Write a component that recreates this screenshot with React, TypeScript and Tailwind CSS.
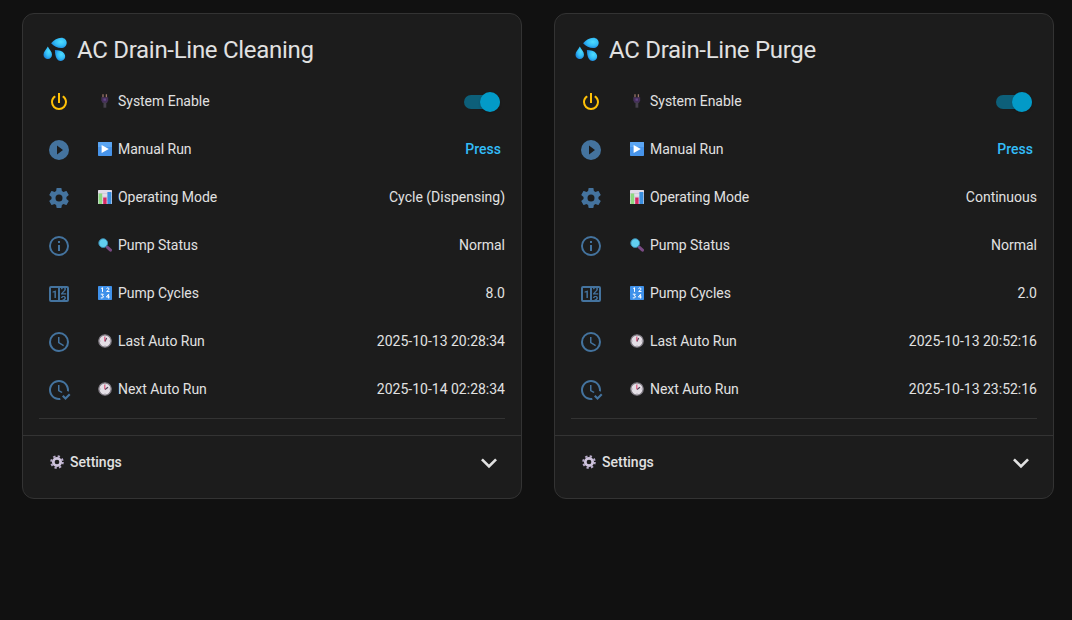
import React from "react";

const MDI = {
  power:
    "M16.56,5.44L15.11,6.89C16.84,7.94 18,9.83 18,12A6,6 0 0,1 12,18A6,6 0 0,1 6,12C6,9.83 7.16,7.94 8.88,6.88L7.44,5.44C5.36,6.88 4,9.28 4,12A8,8 0 0,0 12,20A8,8 0 0,0 20,12C20,9.28 18.64,6.88 16.56,5.44M13,3H11V13H13",
  play: "M10,16.5V7.5L16,12M12,2A10,10 0 0,0 2,12A10,10 0 0,0 12,22A10,10 0 0,0 22,12A10,10 0 0,0 12,2Z",
  cog: "M12,15.5A3.5,3.5 0 0,1 8.5,12A3.5,3.5 0 0,1 12,8.5A3.5,3.5 0 0,1 15.5,12A3.5,3.5 0 0,1 12,15.5M19.43,12.97C19.47,12.65 19.5,12.33 19.5,12C19.5,11.67 19.47,11.34 19.43,11L21.54,9.37C21.73,9.22 21.78,8.95 21.66,8.73L19.66,5.27C19.54,5.05 19.27,4.96 19.05,5.05L16.56,6.05C16.04,5.66 15.5,5.32 14.87,5.07L14.5,2.42C14.46,2.18 14.25,2 14,2H10C9.75,2 9.54,2.18 9.5,2.42L9.13,5.07C8.5,5.32 7.96,5.66 7.44,6.05L4.95,5.05C4.73,4.96 4.46,5.05 4.34,5.27L2.34,8.73C2.21,8.95 2.27,9.22 2.46,9.37L4.57,11C4.53,11.34 4.5,11.67 4.5,12C4.5,12.33 4.53,12.65 4.57,12.97L2.46,14.63C2.27,14.78 2.21,15.05 2.34,15.27L4.34,18.73C4.46,18.95 4.73,19.03 4.95,18.95L7.44,17.94C7.96,18.34 8.5,18.68 9.13,18.93L9.5,21.58C9.54,21.82 9.75,22 10,22H14C14.25,22 14.46,21.82 14.5,21.58L14.87,18.93C15.5,18.67 16.04,18.34 16.56,17.94L19.05,18.95C19.27,19.03 19.54,18.95 19.66,18.73L21.66,15.27C21.78,15.05 21.73,14.78 21.54,14.63L19.43,12.97Z",
  info: "M11,9H13V7H11M12,20C7.59,20 4,16.41 4,12C4,7.59 7.59,4 12,4C16.41,4 20,7.59 20,12C20,16.41 16.41,20 12,20M12,2A10,10 0 0,0 2,12A10,10 0 0,0 12,22A10,10 0 0,0 22,12A10,10 0 0,0 12,2M11,17H13V11H11V17Z",
  counter:
    "M4,4H20A2,2 0 0,1 22,6V18A2,2 0 0,1 20,20H4A2,2 0 0,1 2,18V6A2,2 0 0,1 4,4M4,6V18H11V6H4M20,18V6H18.76C19,6.54 18.95,7.07 18.95,7.13C18.88,7.8 18.41,8.5 18.24,8.75L15.91,11.3L19.23,11.28L19.24,12.5L14.04,12.47L14,11.47C14,11.47 17.05,8.24 17.2,7.95C17.34,7.67 17.91,6 16.5,6C15.27,6.05 15.41,7.3 15.41,7.3L13.87,7.31C13.87,7.31 13.88,6.65 14.25,6H13V18H15.58L15.57,17.14L16.54,17.13C16.54,17.13 17.45,16.97 17.46,16.08C17.5,15.08 16.65,15.08 16.5,15.08C16.37,15.08 15.43,15.13 15.43,15.95H13.91C13.91,15.95 13.95,13.89 16.5,13.89C19.1,13.89 18.96,15.91 18.96,15.91C18.96,15.91 19,17.16 17.85,17.63L18.37,18H20M8.92,16H7.42V10.2L5.62,10.76V9.53L8.76,8.41H8.92V16Z",
  clock:
    "M12,20A8,8 0 0,0 20,12A8,8 0 0,0 12,4A8,8 0 0,0 4,12A8,8 0 0,0 12,20M12,2A10,10 0 0,1 22,12A10,10 0 0,1 12,22C6.47,22 2,17.5 2,12A10,10 0 0,1 12,2M12.5,7V12.25L17,14.92L16.25,16.15L11,13V7H12.5Z",
  clockCheck:
    "M23.5 17L18.5 22L15 18.5L16.5 17L18.5 19L22 15.5L23.5 17M13.1 19.9C12.7 20 12.4 20 12 20C7.6 20 4 16.4 4 12S7.6 4 12 4 20 7.6 20 12C20 12.4 20 12.7 19.9 13.1C20.6 13.2 21.2 13.4 21.8 13.7C21.9 13.1 22 12.6 22 12C22 6.5 17.5 2 12 2S2 6.5 2 12C2 17.5 6.5 22 12 22C12.6 22 13.2 21.9 13.7 21.8C13.4 21.3 13.2 20.6 13.1 19.9M15.6 14.1L12.5 12.3V7H11V13L14.5 15.1C14.8 14.7 15.2 14.4 15.6 14.1Z",
  chevron: "M7.41,8.58L12,13.17L16.59,8.58L18,10L12,16L6,10L7.41,8.58Z",
};

type IconName = keyof typeof MDI;

function Icon({ name, className }: { name: IconName; className: string }) {
  return (
    <svg viewBox="0 0 24 24" className={className} fill="currentColor">
      <path d={MDI[name]} />
    </svg>
  );
}

function Droplets() {
  return (
    <svg viewBox="0 0 24 24" className="size-6 shrink-0 overflow-visible">
      <defs>
        <radialGradient id="drop" cx="0.62" cy="0.4" r="0.65">
          <stop offset="0" stopColor="#4fdcff" />
          <stop offset="0.55" stopColor="#33bdf6" />
          <stop offset="1" stopColor="#1c86dd" />
        </radialGradient>
      </defs>
      <path d="M8.100 5.200C11 1.800 14.500-.3 18.300-.3c3.200 0 5.400 2.200 5.400 5.100s-2.200 5.300-5.500 5.300c-3.900 0-7.300-2-10.100-4.900Z" fill="url(#drop)" />
      <path d="M4.800 8.600C6.500 11.600 9 13.900 9 16.700c0 2.500-1.800 4.200-4.200 4.200S.5 19.200.5 16.700c0-2.800 2.600-5.100 4.300-8.100Z" fill="url(#drop)" />
      <path d="M11.900 12.100c4 .1 7.500.8 9.300 3.300 1.600 2.300 1.200 4.900-.8 6.600-2.100 1.600-4.900 1.300-6.400-.9-1.700-2.500-2-5.800-2.100-9Z" fill="url(#drop)" />
    </svg>
  );
}

type EmojiName = "plug" | "play" | "chart" | "lens" | "numbers" | "clock1" | "clock2" | "gear";

function ClockFace({ hand, minute }: { hand: string; minute: string }) {
  return (
    <>
      <circle cx="7" cy="7" r="6.200" fill="#e4dfe6" stroke="#7d7880" strokeWidth="1.300" />
      <path d="M7 2v1M7 11v1M2 7h1M11 7h1" stroke="#b3acb8" strokeWidth=".8" />
      <path d={hand} stroke="#4b3f57" strokeWidth="1.200" fill="none" />
      <path d={minute} stroke="#e04a70" strokeWidth="1.100" />
    </>
  );
}

function Emoji({ name }: { name: EmojiName }) {
  return (
    <svg viewBox="0 0 14 14" className="size-3.5 shrink-0">
      {name === "plug" && (
        <>
          <path d="M5 .3v3.200M8.400 .3v3.200" stroke="#9b7568" strokeWidth="1.300" />
          <path d="M3.300 3.200h6.900v3.300L8.900 9H4.700L3.300 6.500Z" fill="#443058" />
          <path d="M6.900 8.500v5.200" stroke="#45404b" strokeWidth="2.800" />
          <path d="M5.500 4.500h2.400v2.200H5.500z" fill="#66448b" />
        </>
      )}
      {name === "play" && (
        <>
          <rect width="14" height="14" rx=".7" fill="#4794ea" />
          <path d="M0 .7Q0 0 .7 0h12.600q.7 0 .7.700V5H0Z" fill="#5ba5f2" />
          <path d="M3.600 2.900v8.200L10.800 7Z" fill="#fff" />
        </>
      )}
      {name === "chart" && (
        <>
          <rect width="14" height="14" rx=".5" fill="#e2dce8" />
          <path d="M0 3.500h14M0 7h14M0 10.500h14" stroke="#c4bccb" strokeWidth=".5" />
          <rect x=".6" y="3.500" width="3.600" height="10.500" fill="#8cd97f" />
          <rect x="5.200" y="7.500" width="3.400" height="6.500" fill="#d62864" />
          <rect x="9.400" y="2" width="4" height="12" fill="#3a8fe0" />
        </>
      )}
      {name === "lens" && (
        <>
          <path d="m9.200 9.200 3.300 3" stroke="#794a83" strokeWidth="3" strokeLinecap="round" />
          <circle cx="5.200" cy="5.100" r="4.400" fill="#62cef0" stroke="#3a89ad" strokeWidth="1" />
        </>
      )}
      {name === "numbers" && (
        <>
          <rect width="14" height="14" rx=".7" fill="#3f91ea" />
          <path
            d="M3.200 2.500 4.500 1.700v4.200M8.500 2.500Q9 1.800 10 1.900q1.300.2.900 1.600L8.600 5.500h2.900M2.800 8.200h2.500L4.200 9.700q1.400.1 1.200 1.300-.3 1.300-2.600.9M10.600 12.500V8.200L8.400 11h3.200"
            stroke="#fff"
            strokeWidth="1"
            fill="none"
          />
        </>
      )}
      {name === "clock1" && <ClockFace hand="M7 7.400 8.600 4" minute="M6.800 7.300V2.800" />}
      {name === "clock2" && <ClockFace hand="M7 7.400 10 5.200" minute="M6.800 7.300V2.800" />}
      {name === "gear" && (
        <>
          <circle cx="7" cy="7" r="5.800" fill="none" stroke="#b9accb" strokeWidth="2" strokeDasharray="2.280 2.275" />
          <circle cx="7" cy="7" r="3.700" fill="none" stroke="#cec3dc" strokeWidth="2.700" />
        </>
      )}
    </svg>
  );
}

interface RowData {
  icon: IconName;
  emoji: EmojiName;
  label: string;
  value?: string;
}

function Row({ row }: { row: RowData }) {
  return (
    <div className="flex h-10 items-center">
      <div className="flex w-10 justify-center pt-0.5">
        <Icon name={row.icon} className={row.icon === "power" ? "size-6 text-[#ffc107]" : "size-6 text-[#44739e]"} />
      </div>
      <div className="ml-[19px] flex flex-1 items-center gap-1.5">
        <Emoji name={row.emoji} />
        <span className="tracking-[-0.03px]">{row.label}</span>
      </div>
      {row.icon === "power" && (
        <div className="mr-[5px] mt-0.5 flex h-5 w-9 items-center">
          <div className="flex h-3.5 w-9 items-center justify-end rounded-full bg-[#0d5f79]">
            <div className="size-5 shrink-0 rounded-full bg-[#039ac7] shadow-sm" />
          </div>
        </div>
      )}
      {row.icon === "play" && <span className="mr-1 font-medium text-[#33bdf8]">Press</span>}
      {row.value && <span>{row.value}</span>}
    </div>
  );
}

interface CardProps {
  title: string;
  mode: string;
  cycles: string;
  last: string;
  next: string;
}

function Card({ title, mode, cycles, last, next }: CardProps) {
  const rows: RowData[] = [
    { icon: "power", emoji: "plug", label: "System Enable" },
    { icon: "play", emoji: "play", label: "Manual Run" },
    { icon: "cog", emoji: "chart", label: "Operating Mode", value: mode },
    { icon: "info", emoji: "lens", label: "Pump Status", value: "Normal" },
    { icon: "counter", emoji: "numbers", label: "Pump Cycles", value: cycles },
    { icon: "clock", emoji: "clock1", label: "Last Auto Run", value: last },
    { icon: "clockCheck", emoji: "clock2", label: "Next Auto Run", value: next },
  ];
  return (
    <section className="h-[486px] w-[500px] rounded-xl border border-[#333333] bg-[#1c1c1c] text-sm text-[#e1e1e1]">
      <h1 className="flex h-[67px] items-center gap-2.5 pl-5 pt-[5px] text-2xl tracking-[-0.012em]">
        <Droplets />
        {title}
      </h1>
      <div className="mx-4 flex flex-col gap-2">
        {rows.map((row) => (
          <Row key={row.label} row={row} />
        ))}
      </div>
      <div className="mx-4 mt-[9px] h-px bg-[#333333]" />
      <div className="mt-4 flex h-[54px] items-center border-t border-[#333333] pl-[27px] pr-4 font-medium">
        <div className="flex flex-1 items-center gap-1.5 pb-0.5">
          <Emoji name="gear" />
          <span>Settings</span>
        </div>
        <Icon name="chevron" className="size-8" />
      </div>
    </section>
  );
}

export default function App() {
  return (
    <main className="flex h-[620px] w-[1072px] gap-8 bg-[#111111] pl-[22px] pt-[13px] font-['Roboto',sans-serif]">
      <Card title="AC Drain-Line Cleaning" mode="Cycle (Dispensing)" cycles="8.0" last="2025-10-13 20:28:34" next="2025-10-14 02:28:34" />
      <Card title="AC Drain-Line Purge" mode="Continuous" cycles="2.0" last="2025-10-13 20:52:16" next="2025-10-13 23:52:16" />
    </main>
  );
}
